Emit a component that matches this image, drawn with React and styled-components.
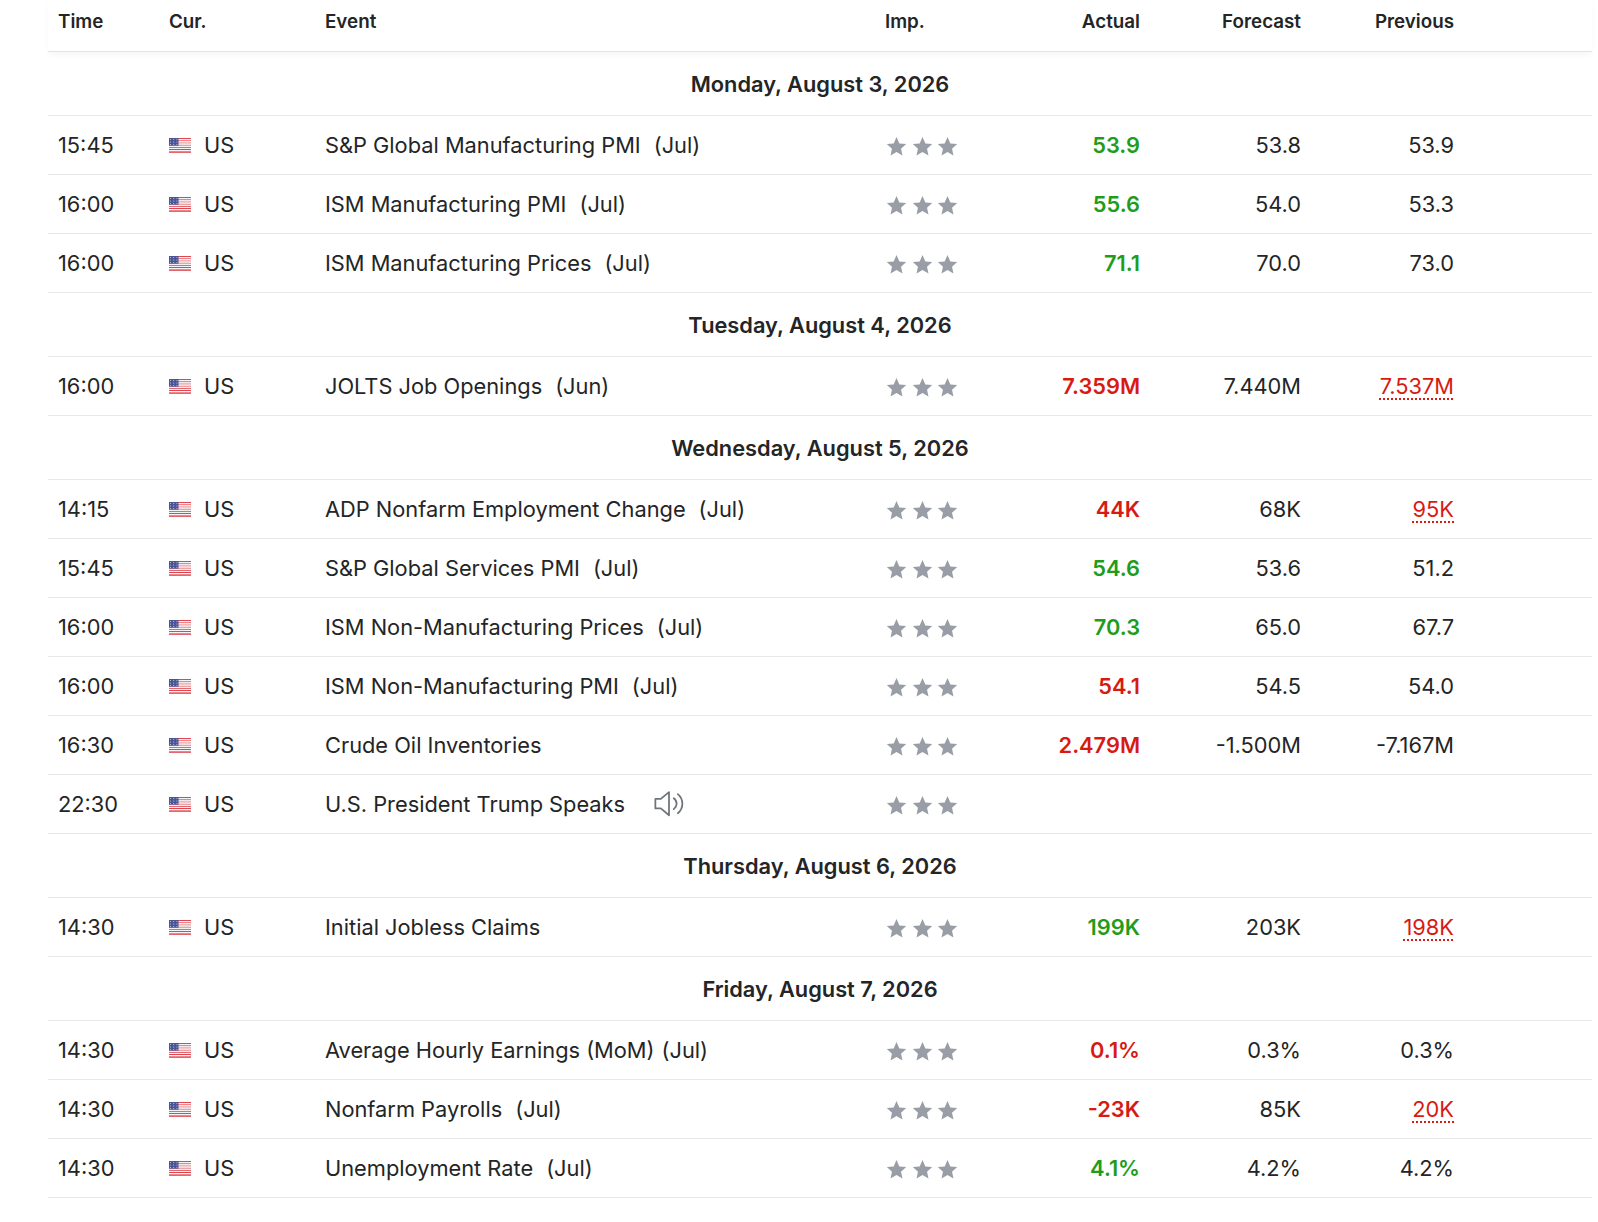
import React from 'react';
import styled, { createGlobalStyle, css } from 'styled-components';

const GlobalStyle = createGlobalStyle`
    html, body {
        margin: 0;
        padding: 0;
        background: #fff;
        overflow: hidden;
    }
    body {
        font-family: Inter, 'Noto Sans', 'Liberation Sans', sans-serif;
        color: #232526;
    }
`;

const columns = '111px 156px 560px 135px 120px 161px 153px 1fr';

const Page = styled.div`
    padding: 0 6px 0 48px;
`;

const Table = styled.div`
    width: 100%;
`;

const HeaderRow = styled.div`
    display: grid;
    grid-template-columns: ${columns};
    align-items: center;
    height: 43px;
    padding: 0 0 8px 10px;
    border-bottom: 1px solid #e3e5e9;
    box-shadow: 0 4px 8px -2px rgba(0, 0, 0, 0.05);
    font-size: 18.8px;
    font-weight: 600;
    color: #232526;
    position: relative;
    z-index: 1;
`;

const HeadCell = styled.div`
    text-align: ${p => (p.right ? 'right' : 'left')};
`;

const DayRow = styled.div`
    height: 63px;
    border-bottom: 1px solid #e6e8eb;
    display: flex;
    align-items: center;
    justify-content: center;
    font-size: 21.8px;
    font-weight: 600;
    color: #232526;
`;

const Row = styled.div`
    display: grid;
    grid-template-columns: ${columns};
    align-items: center;
    height: 58px;
    padding-left: 10px;
    border-bottom: 1px solid #e6e8eb;
    font-size: 21.8px;
    color: #232526;
`;

const Cell = styled.div`
    display: flex;
    align-items: center;
    white-space: nowrap;
    ${p =>
        p.right &&
        css`
            justify-content: flex-end;
        `}
`;

const Flag = styled.svg`
    width: 22px;
    height: 15px;
    margin-right: 13px;
    flex-shrink: 0;
`;

const Period = styled.span`
    margin-left: ${p => (p.tight ? '7px' : '13px')};
`;

const Stars = styled.div`
    display: flex;
    gap: 2.5px;
    margin-top: 2px;
`;

const Star = styled.svg`
    width: 23px;
    height: 23px;
    fill: #989da6;
`;

const Speaker = styled.svg`
    width: 30px;
    height: 28px;
    margin-left: 29px;
    stroke: #6f747c;
    fill: none;
    stroke-width: 1.3;
    stroke-linecap: round;
    stroke-linejoin: round;
`;

const Value = styled.span`
    font-weight: ${p => (p.tone ? 600 : 400)};
    color: ${p => (p.tone === 'up' ? '#1f9d1a' : p.tone === 'down' ? '#d71b12' : '#232526')};
    ${p =>
        p.revised &&
        css`
            color: #d71b12;
            text-decoration: underline dotted #d71b12;
            text-decoration-thickness: 2px;
            text-underline-offset: 4px;
        `}
`;

const UsFlag = () => (
    <Flag viewBox="0 0 22 15">
        {[0, 1, 2, 3, 4, 5, 6].map(i => (
            <rect key={i} x="0" y={i * 2.2} width="22" height="1.1" fill="#e0464f" />
        ))}
        {[0, 1, 2, 3, 4, 5, 6].map(i => (
            <rect key={'w' + i} x="0" y={i * 2.2 + 1.1} width="22" height="1.1" fill="#f4f4f6" />
        ))}
        <rect x="0" y="0" width="9.5" height="7.7" fill="#4a5596" />
        {[1.5, 4, 6.5].map(cy =>
            [1.5, 4.7, 7.9].map(cx => <circle key={cx + '-' + cy} cx={cx} cy={cy} r="0.55" fill="#c9cde4" />)
        )}
        <rect x="0" y="14.2" width="22" height="0.8" fill="#e0464f" />
    </Flag>
);

const StarIcon = () => (
    <Star viewBox="0 0 24 24">
        <path d="M12 2.2l2.95 6.55 7.15.72-5.37 4.8 1.52 7.03L12 17.7l-6.25 3.6 1.52-7.03-5.37-4.8 7.15-.72z" />
    </Star>
);

const SpeakerIcon = () => (
    <Speaker viewBox="3 4 22 20.5">
        <path d="M4 10.5h4l6-5v17l-6-5H4z" />
        <path d="M17.5 10c1.4 1.1 2.1 2.4 2.1 4s-.7 2.9-2.1 4" />
        <path d="M20.5 7c2.2 1.9 3.3 4.2 3.3 7s-1.1 5.1-3.3 7" />
    </Speaker>
);

const days = [
    {
        title: 'Monday, August 3, 2026',
        events: [
            { time: '15:45', name: 'S&P Global Manufacturing PMI', period: '(Jul)', actual: '53.9', tone: 'up', forecast: '53.8', previous: '53.9' },
            { time: '16:00', name: 'ISM Manufacturing PMI', period: '(Jul)', actual: '55.6', tone: 'up', forecast: '54.0', previous: '53.3' },
            { time: '16:00', name: 'ISM Manufacturing Prices', period: '(Jul)', actual: '71.1', tone: 'up', forecast: '70.0', previous: '73.0' }
        ]
    },
    {
        title: 'Tuesday, August 4, 2026',
        events: [
            { time: '16:00', name: 'JOLTS Job Openings', period: '(Jun)', actual: '7.359M', tone: 'down', forecast: '7.440M', previous: '7.537M', revised: true }
        ]
    },
    {
        title: 'Wednesday, August 5, 2026',
        events: [
            { time: '14:15', name: 'ADP Nonfarm Employment Change', period: '(Jul)', actual: '44K', tone: 'down', forecast: '68K', previous: '95K', revised: true },
            { time: '15:45', name: 'S&P Global Services PMI', period: '(Jul)', actual: '54.6', tone: 'up', forecast: '53.6', previous: '51.2' },
            { time: '16:00', name: 'ISM Non-Manufacturing Prices', period: '(Jul)', actual: '70.3', tone: 'up', forecast: '65.0', previous: '67.7' },
            { time: '16:00', name: 'ISM Non-Manufacturing PMI', period: '(Jul)', actual: '54.1', tone: 'down', forecast: '54.5', previous: '54.0' },
            { time: '16:30', name: 'Crude Oil Inventories', actual: '2.479M', tone: 'down', forecast: '-1.500M', previous: '-7.167M' },
            { time: '22:30', name: 'U.S. President Trump Speaks', speech: true }
        ]
    },
    {
        title: 'Thursday, August 6, 2026',
        events: [
            { time: '14:30', name: 'Initial Jobless Claims', actual: '199K', tone: 'up', forecast: '203K', previous: '198K', revised: true }
        ]
    },
    {
        title: 'Friday, August 7, 2026',
        events: [
            { time: '14:30', name: 'Average Hourly Earnings (MoM)', period: '(Jul)', tight: true, actual: '0.1%', tone: 'down', forecast: '0.3%', previous: '0.3%' },
            { time: '14:30', name: 'Nonfarm Payrolls', period: '(Jul)', actual: '-23K', tone: 'down', forecast: '85K', previous: '20K', revised: true },
            { time: '14:30', name: 'Unemployment Rate', period: '(Jul)', actual: '4.1%', tone: 'up', forecast: '4.2%', previous: '4.2%' }
        ]
    }
];

const EventRow = ({ e }) => (
    <Row>
        <Cell>{e.time}</Cell>
        <Cell>
            <UsFlag />
            US
        </Cell>
        <Cell>
            {e.name}
            {e.period && <Period tight={e.tight}>{e.period}</Period>}
            {e.speech && <SpeakerIcon />}
        </Cell>
        <Cell>
            <Stars>
                <StarIcon />
                <StarIcon />
                <StarIcon />
            </Stars>
        </Cell>
        <Cell right>{e.actual && <Value tone={e.tone}>{e.actual}</Value>}</Cell>
        <Cell right>{e.forecast && <Value>{e.forecast}</Value>}</Cell>
        <Cell right>{e.previous && <Value revised={e.revised}>{e.previous}</Value>}</Cell>
        <Cell />
    </Row>
);

const App = () => (
    <>
        <GlobalStyle />
        <Page>
            <Table>
                <HeaderRow>
                    <HeadCell>Time</HeadCell>
                    <HeadCell>Cur.</HeadCell>
                    <HeadCell>Event</HeadCell>
                    <HeadCell>Imp.</HeadCell>
                    <HeadCell right>Actual</HeadCell>
                    <HeadCell right>Forecast</HeadCell>
                    <HeadCell right>Previous</HeadCell>
                    <HeadCell />
                </HeaderRow>
                {days.map(day => (
                    <React.Fragment key={day.title}>
                        <DayRow>{day.title}</DayRow>
                        {day.events.map((e, i) => (
                            <EventRow key={i} e={e} />
                        ))}
                    </React.Fragment>
                ))}
            </Table>
        </Page>
    </>
);

export default App;
